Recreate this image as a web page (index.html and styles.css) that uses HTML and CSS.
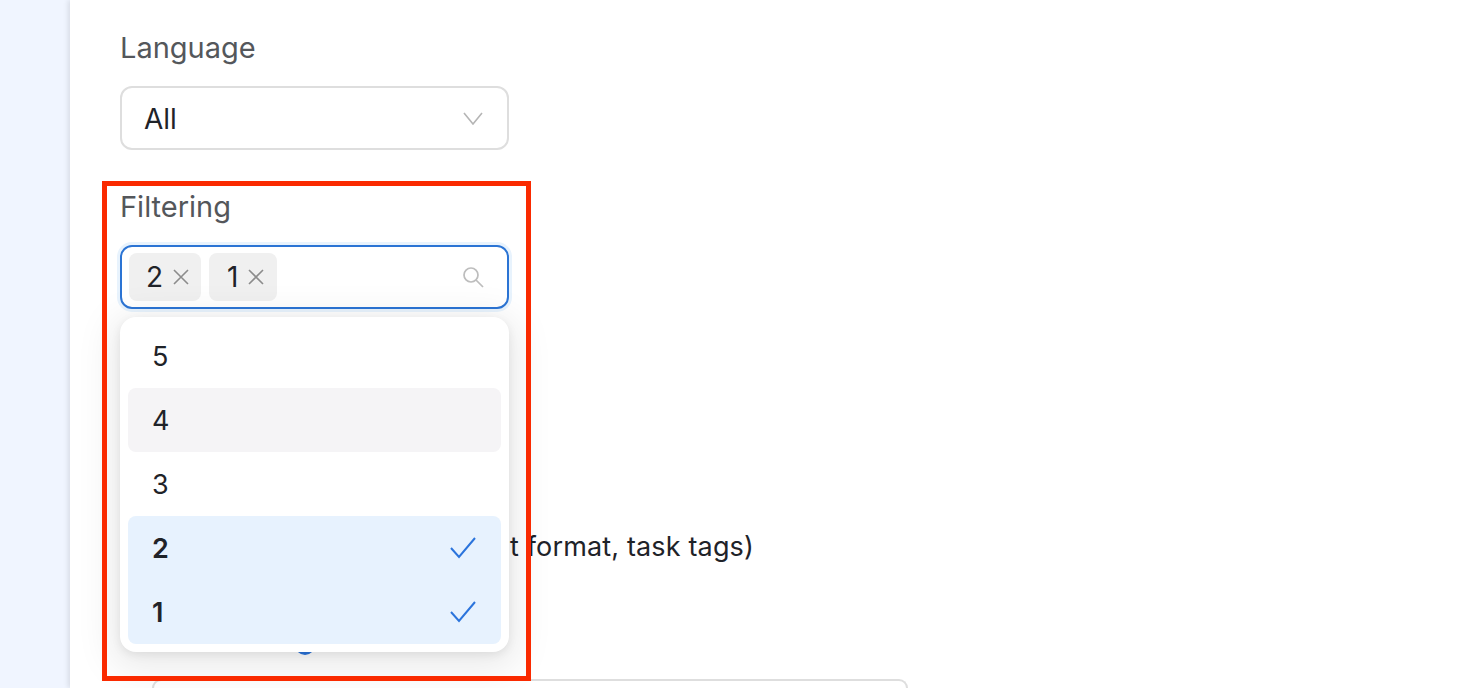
FILE: index.html
```html
<html>
<head>
<title>Settings</title>
<link rel="stylesheet" href="styles.css">
</head>
<body>

<div class="page">
  <div class="side"></div>
  <div class="panel">

    <div class="field">
      <div class="label">Language</div>
      <div class="select">
        <span class="value">All</span>
        <svg class="icon" width="22" height="14" viewBox="0 0 22 14"><path d="M2 2 L11 13 L20 2" fill="none" stroke="#b5b5b5" stroke-width="1.6"/></svg>
      </div>
    </div>

    <div class="field filter">
      <div class="label">Filtering</div>
      <div class="select focused">
        <span class="tag">2<svg width="18" height="18" viewBox="0 0 18 18"><path d="M2 2 L16 16 M16 2 L2 16" stroke="#8c8c8c" stroke-width="1.6"/></svg></span>
        <span class="tag">1<svg width="18" height="18" viewBox="0 0 18 18"><path d="M2 2 L16 16 M16 2 L2 16" stroke="#8c8c8c" stroke-width="1.6"/></svg></span>
        <svg class="icon" width="22" height="22" viewBox="0 0 22 22"><circle cx="9" cy="9" r="7" fill="none" stroke="#bdbdbd" stroke-width="1.7"/><path d="M14 14 L21 21" stroke="#bdbdbd" stroke-width="1.7"/></svg>
      </div>

      <div class="dropdown">
        <div class="option">5</div>
        <div class="option hover">4</div>
        <div class="option">3</div>
        <div class="option selected">2<svg width="26" height="22" viewBox="0 0 26 22"><path d="M1 11 L9 20 L25 1" fill="none" stroke="#2b74dc" stroke-width="2"/></svg></div>
        <div class="option selected">1<svg width="26" height="22" viewBox="0 0 26 22"><path d="M1 11 L9 20 L25 1" fill="none" stroke="#2b74dc" stroke-width="2"/></svg></div>
      </div>
    </div>

    <div class="option-line">t format, task tags)</div>
    <div class="hint"><span class="dot"></span></div>
    <div class="bottom-input"></div>

  </div>
</div>

<div class="red-box"></div>

</body>
</html>
```

FILE: styles.css
```css
html, body{
	margin: 0;
	height: 688px;
	overflow: hidden;
	background: #fff;
	font-family: "Inter", "Liberation Sans", sans-serif;
}
.page{
	display: flex;
	height: 688px;
}
.side{
	width: 70px;
	flex: none;
	background: #f0f5ff;
}
.panel{
	flex: 1;
	padding: 30px 0 0 50px;
	background: #fff;
	box-shadow: -2px 0 5px rgba(0,0,0,0.1);
	position: relative;
}
.field{
	width: 389px;
	position: relative;
}
.filter{
	margin-top: 39px;
}
.label{
	font-size: 29px;
	line-height: 36px;
	color: #54575b;
	margin-bottom: 20px;
}
.select{
	height: 64px;
	box-sizing: border-box;
	border: 2px solid #dedede;
	border-radius: 12px;
	display: flex;
	align-items: center;
	padding: 0 23px 0 7px;
	background: #fff;
}
.focused{
	border-color: #2b74d4;
	box-shadow: 0 0 0 3px #e8f3fd;
	gap: 8px;
}
.value{
	font-size: 28px;
	color: #1f2329;
	padding: 2px 0 0 15px;
}
.icon{
	margin-left: auto;
}
.tag{
	height: 48px;
	background: #f0f0f0;
	border-radius: 8px;
	display: flex;
	align-items: center;
	gap: 9px;
	padding: 0 11px 0 17px;
	font-size: 28px;
	color: #1f2329;
}
.tag:nth-child(2){
	padding: 0 12px 0 18px;
}
.dropdown{
	position: absolute;
	top: 128px;
	left: 0;
	right: 0;
	padding: 7px 8px 8px;
	background: #fff;
	border-radius: 16px;
	box-shadow: 0 8px 36px 10px rgba(0,0,0,0.08), 0 3px 10px rgba(0,0,0,0.08);
	z-index: 2;
}
.option{
	height: 64px;
	box-sizing: border-box;
	padding: 0 25px 0 24px;
	display: flex;
	align-items: center;
	justify-content: space-between;
	font-size: 27px;
	color: #1f2329;
	border-radius: 8px;
}
.hover{
	background: #f5f4f6;
}
.selected{
	background: #e7f2fe;
	font-weight: 600;
	border-radius: 0;
}
.option:nth-child(4){
	border-radius: 8px 8px 0 0;
}
.option:nth-child(5){
	border-radius: 0 0 8px 8px;
}
.option-line{
	margin-top: 220px;
	padding-left: 390px;
	font-size: 27px;
	letter-spacing: 0.15px;
	line-height: 36px;
	color: #1f2329;
}
.hint{
	margin-top: 70px;
	padding-left: 175px;
	height: 20px;
}
.dot{
	display: block;
	width: 20px;
	height: 20px;
	border-radius: 50%;
	background: #2b74dc;
}
.bottom-input{
	margin: 24px 0 0 32px;
	width: 756px;
	height: 9px;
	box-sizing: border-box;
	border: 2px solid #dedede;
	border-bottom: none;
	border-radius: 12px 12px 0 0;
}
.red-box{
	position: absolute;
	left: 102px;
	top: 181px;
	width: 429px;
	height: 500px;
	box-sizing: border-box;
	border: 5px solid #fa2a00;
	z-index: 3;
}
```
